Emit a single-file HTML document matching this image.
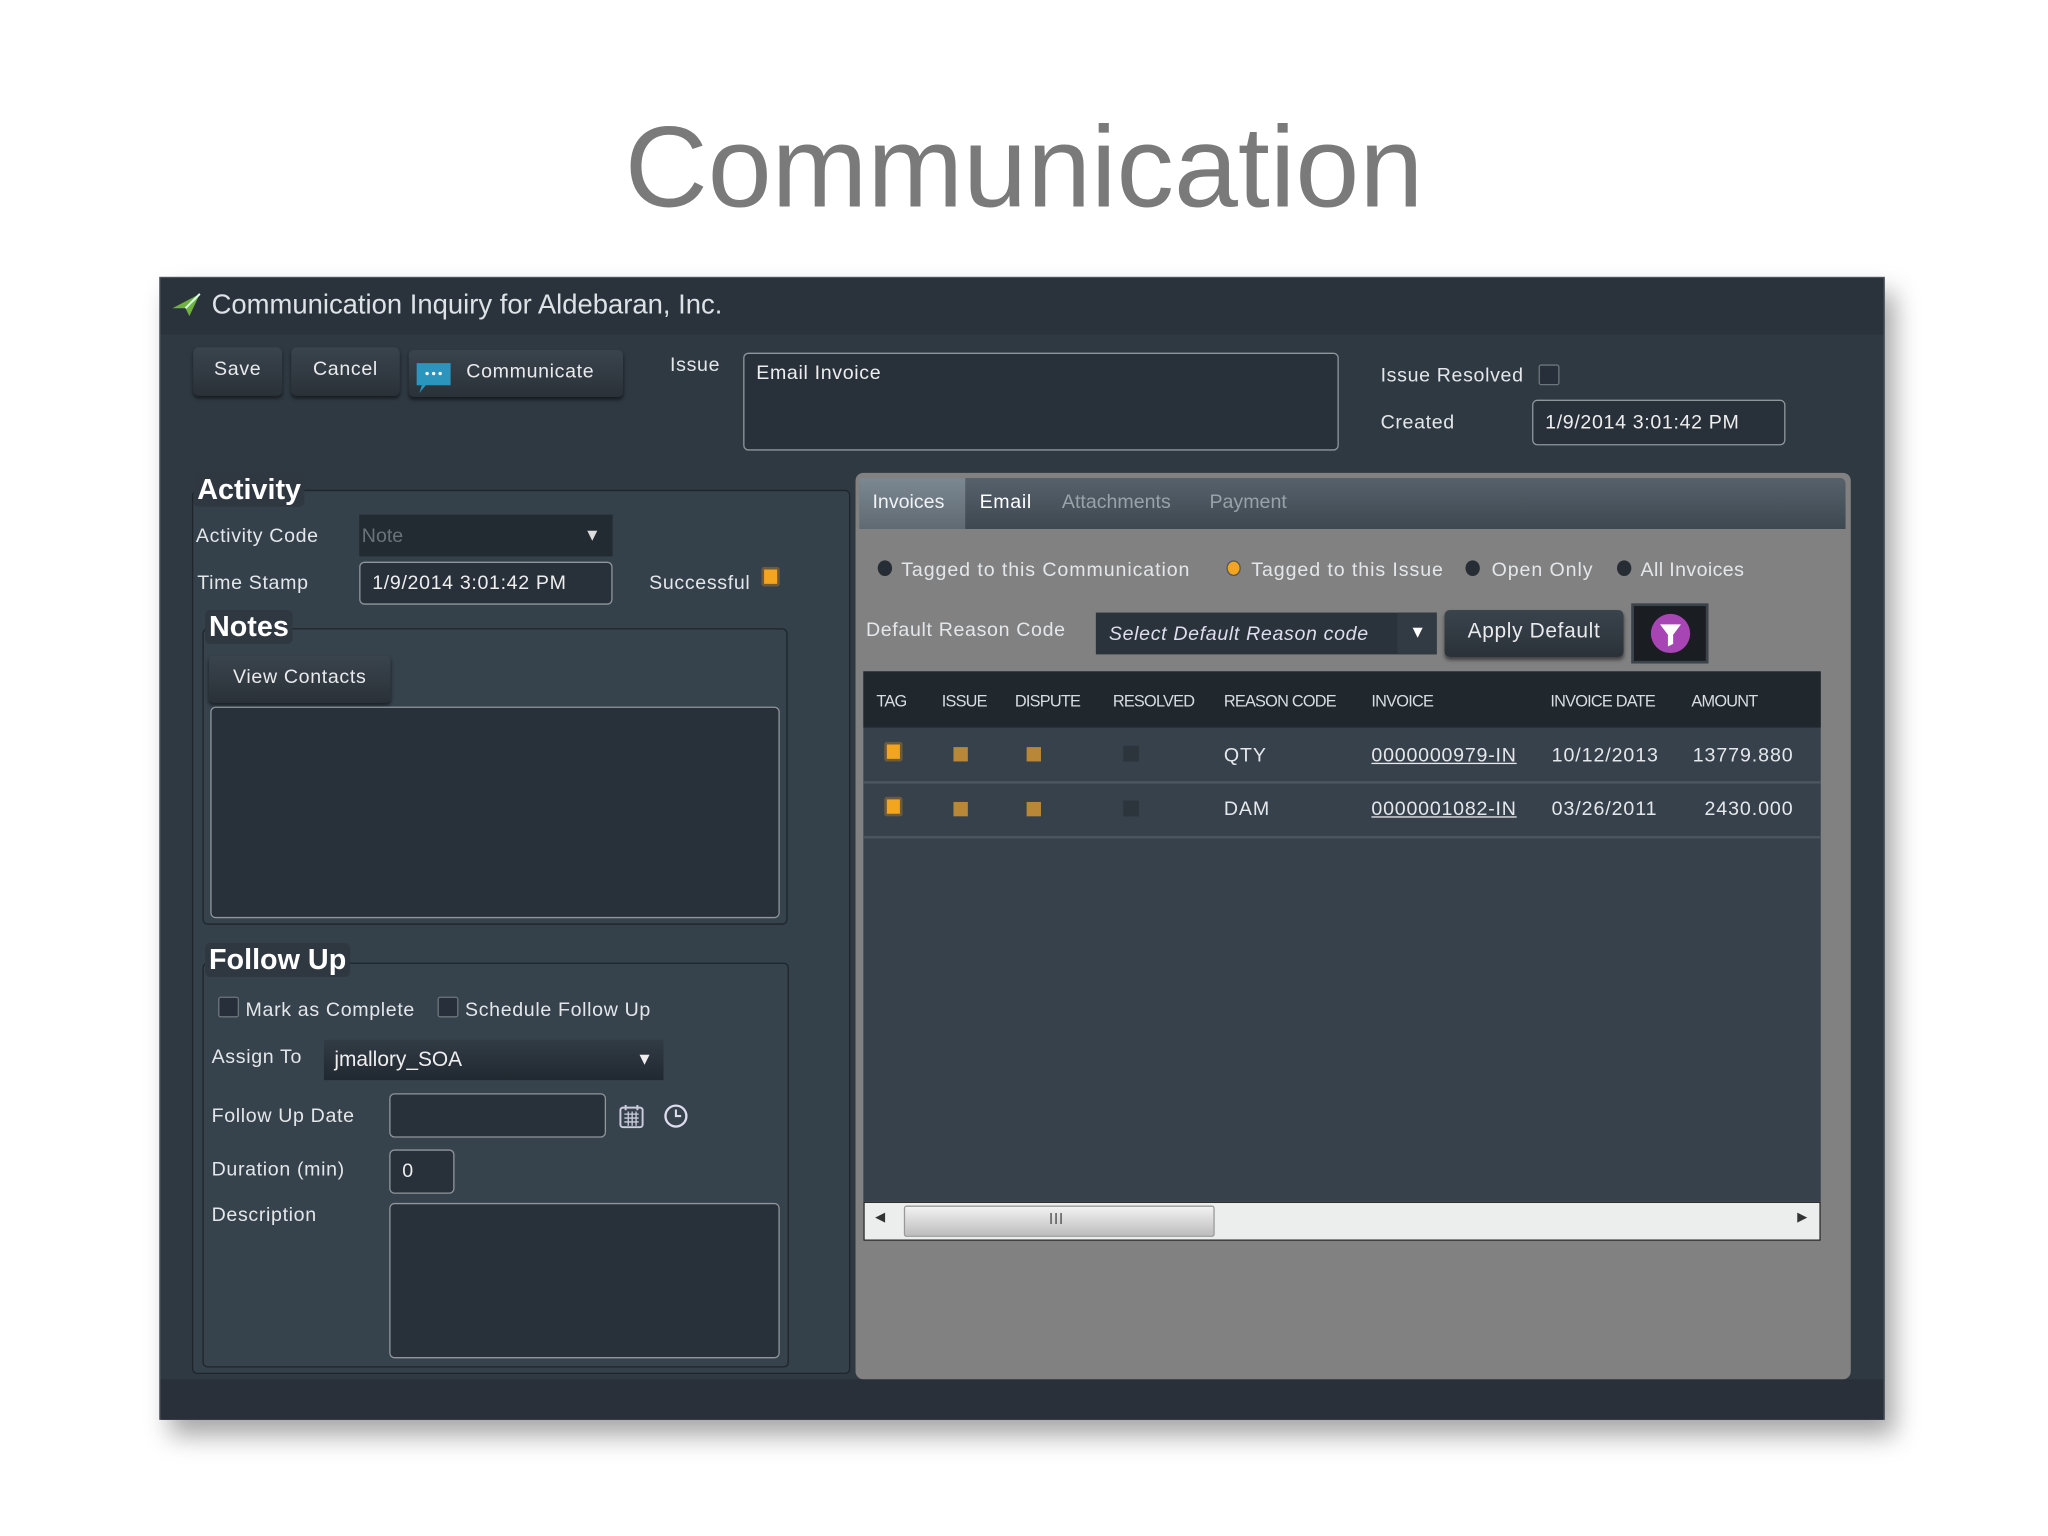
<!DOCTYPE html>
<html><head><meta charset="utf-8"><style>
*{margin:0;padding:0;box-sizing:border-box}
html,body{width:2048px;height:1536px;overflow:hidden;background:#fff}
#w{position:absolute;left:0;top:0;width:1568px;height:1176px;transform:scale(1.30612);transform-origin:0 0;font-family:"Liberation Sans",sans-serif;color:#e6e9ec}
.a{position:absolute}
.t{position:absolute;font-size:15px;white-space:nowrap;color:#e4e7ea;letter-spacing:.5px}
.btn{position:absolute;background:linear-gradient(#3a444d,#2a3138);border-radius:4px;box-shadow:0 2px 3px rgba(0,0,0,.5);color:#e8eaec;font-size:15px;text-align:center;letter-spacing:.5px}
.inp{position:absolute;background:#28313a;border:1px solid #8f969c;border-radius:4px;font-size:15px;color:#eee;padding-left:9px;letter-spacing:.5px}
.grp{position:absolute;border:1px solid #1e252b;border-radius:4px;background:#36424c}
.h{position:absolute;font-weight:bold;font-size:22px;color:#fff;background:#2f3840;padding:0 3px;border-radius:4px}
.cb{position:absolute;width:16px;height:16px;border:1px solid #6d757c;background:#27303a;border-radius:2px}
.or{position:absolute;width:14px;height:15px;background:#f3a51f;border:2px solid #6d5a3a;border-radius:2px}
.sq{position:absolute;width:11px;height:11px;background:#b88838}
.dk{position:absolute;width:12px;height:12px;background:#2c343c}
.th{position:absolute;top:530px;font-size:12.5px;color:#d8dde2;letter-spacing:-.6px}
.td{position:absolute;font-size:15px;color:#e5e8eb;letter-spacing:.7px}
.rd{position:absolute;width:11px;height:12px;border-radius:50%;background:#262d34;top:429px}
</style></head><body><div id="w">
<div class="t" style="left:0;width:1568px;text-align:center;top:77px;font-size:88px;color:#7a7a7a;letter-spacing:0">Communication</div>
<div class="a" style="left:122px;top:212px;width:1321px;height:875px;background:#2f3942;box-shadow:8px 12px 18px rgba(0,0,0,.35);border:1px solid #4a525a"></div>
<div class="a" style="left:123px;top:213px;width:1319px;height:43px;background:#2a333b"></div>
<div class="a" style="left:123px;top:1056px;width:1319px;height:31px;background:#2a3039"></div>
<svg class="a" style="left:131px;top:224px" width="24" height="20"><path d="M1 12 L22 1 L14 18 L11 12 Z" fill="#6fb33e"/><path d="M11 12 L22 1" stroke="#dfe" stroke-width="1.5"/></svg>
<div class="t" style="left:162px;top:222px;font-size:21px;color:#dde2e6;letter-spacing:0">Communication Inquiry for Aldebaran, Inc.</div>
<div class="btn" style="left:148px;top:266px;width:68px;height:37px;line-height:34px">Save</div>
<div class="btn" style="left:223px;top:266px;width:83px;height:37px;line-height:34px">Cancel</div>
<div class="btn" style="left:313px;top:268px;width:164px;height:36px;line-height:34px;text-align:left;padding-left:44px">Communicate</div>
<svg class="a" style="left:318px;top:277px" width="28" height="25"><path d="M1 1 H27 V18 H8 L3 24 L5 18 H1 Z" fill="#2b95be"/><circle cx="9" cy="9" r="1.3" fill="#fff"/><circle cx="14" cy="9" r="1.3" fill="#fff"/><circle cx="19" cy="9" r="1.3" fill="#fff"/></svg>
<div class="t" style="left:513px;top:271px">Issue</div>
<div class="inp" style="left:569px;top:270px;width:456px;height:75px;padding-top:6px">Email Invoice</div>
<div class="t" style="left:1057px;top:279px">Issue Resolved</div>
<div class="cb" style="left:1178px;top:279px"></div>
<div class="t" style="left:1057px;top:315px">Created</div>
<div class="inp" style="left:1173px;top:306px;width:194px;height:35px;line-height:33px">1/9/2014 3:01:42 PM</div>

<div class="grp" style="left:147px;top:375px;width:504px;height:677px;background:#34404a"></div>
<div class="h" style="left:148px;top:362px">Activity</div>
<div class="t" style="left:150px;top:402px">Activity Code</div>
<div class="a" style="left:275px;top:394px;width:194px;height:32px;background:#232b32;color:#6b737a;font-size:15px;padding:8px 2px">Note</div>
<div class="t" style="left:447px;top:402px;font-size:13px;color:#ddd">▼</div>
<div class="t" style="left:151px;top:438px">Time Stamp</div>
<div class="inp" style="left:275px;top:430px;width:194px;height:33px;line-height:31px">1/9/2014 3:01:42 PM</div>
<div class="t" style="left:497px;top:438px">Successful</div>
<div class="or" style="left:583px;top:434px"></div>

<div class="grp" style="left:155px;top:481px;width:448px;height:227px"></div>
<div class="h" style="left:157px;top:467px">Notes</div>
<div class="btn" style="left:160px;top:502px;width:139px;height:36px;line-height:34px">View Contacts</div>
<div class="inp" style="left:161px;top:541px;width:436px;height:162px"></div>

<div class="grp" style="left:155px;top:737px;width:449px;height:310px"></div>
<div class="h" style="left:157px;top:722px">Follow Up</div>
<div class="cb" style="left:167px;top:763px"></div>
<div class="t" style="left:188px;top:765px">Mark as Complete</div>
<div class="cb" style="left:335px;top:763px"></div>
<div class="t" style="left:356px;top:765px">Schedule Follow Up</div>
<div class="t" style="left:162px;top:801px">Assign To</div>
<div class="a" style="left:248px;top:796px;width:260px;height:31px;background:linear-gradient(#323c45,#202830);font-size:16px;padding:7px 8px;color:#eee">jmallory_SOA</div>
<div class="t" style="left:487px;top:803px;font-size:13px;color:#eee">▼</div>
<div class="t" style="left:162px;top:846px">Follow Up Date</div>
<div class="inp" style="left:298px;top:837px;width:166px;height:34px"></div>
<svg class="a" style="left:474px;top:845px" width="20" height="20"><rect x="1" y="3" width="17" height="15" rx="2" fill="none" stroke="#ccd" stroke-width="1.5"/><path d="M4 8h11M4 11h11M4 14h11M7 6v11M10 6v11M13 6v11" stroke="#ccd" stroke-width="1"/><path d="M5 1v4M14 1v4" stroke="#ccd" stroke-width="1.5"/></svg>
<svg class="a" style="left:508px;top:845px" width="20" height="20"><circle cx="9.5" cy="9.5" r="8" fill="none" stroke="#dde" stroke-width="1.8"/><path d="M9.5 4.5v5h4" fill="none" stroke="#dde" stroke-width="1.6"/></svg>
<div class="t" style="left:162px;top:887px">Duration (min)</div>
<div class="inp" style="left:298px;top:880px;width:50px;height:34px;line-height:32px">0</div>
<div class="t" style="left:162px;top:922px">Description</div>
<div class="inp" style="left:298px;top:921px;width:299px;height:119px"></div>

<div class="a" style="left:655px;top:362px;width:762px;height:694px;background:#818181;border-radius:6px"></div>
<div class="a" style="left:658px;top:366px;width:755px;height:39px;background:linear-gradient(#56616b,#3e4851);border-radius:4px 4px 0 0"></div>
<div class="a" style="left:658px;top:366px;width:81px;height:39px;background:linear-gradient(#7c8891,#5f6a73)"></div>
<div class="t" style="left:668px;top:376px;color:#f0f2f4;letter-spacing:0">Invoices</div>
<div class="t" style="left:750px;top:376px;color:#fff">Email</div>
<div class="t" style="left:813px;top:376px;color:#9aa2a9;letter-spacing:0">Attachments</div>
<div class="t" style="left:926px;top:376px;color:#9aa2a9;letter-spacing:0">Payment</div>
<div class="rd" style="left:672px"></div><div class="t" style="left:690px;top:428px;letter-spacing:.7px">Tagged to this Communication</div>
<div class="rd" style="left:939px;background:#f3a51f;border:1px solid #555"></div><div class="t" style="left:958px;top:428px;letter-spacing:.7px">Tagged to this Issue</div>
<div class="rd" style="left:1122px"></div><div class="t" style="left:1142px;top:428px;letter-spacing:.7px">Open Only</div>
<div class="rd" style="left:1238px"></div><div class="t" style="left:1256px;top:428px;letter-spacing:.3px">All Invoices</div>
<div class="t" style="left:663px;top:474px">Default Reason Code</div>
<div class="a" style="left:839px;top:469px;width:261px;height:32px;background:#2a333b"></div>
<div class="a" style="left:1070px;top:469px;width:30px;height:32px;background:#323b43"></div>
<div class="t" style="left:849px;top:477px;font-style:italic;color:#dde">Select Default Reason code</div>
<div class="t" style="left:1079px;top:476px;font-size:13px;color:#fff">▼</div>
<div class="btn" style="left:1106px;top:467px;width:137px;height:36px;line-height:34px;font-size:16px">Apply Default</div>
<div class="a" style="left:1249px;top:462px;width:59px;height:46px;background:#1a1e22;border:2px solid #3c444b"></div>
<svg class="a" style="left:1263px;top:469px" width="32" height="32"><circle cx="16" cy="16" r="15" fill="#a845b5"/><path d="M8 9h16l-6 8v7l-4 2v-9z" fill="#fff"/></svg>
<div class="a" style="left:661px;top:514px;width:733px;height:407px;background:#36414b"></div>
<div class="a" style="left:661px;top:514px;width:733px;height:43px;background:#20272d"></div>
<div class="a" style="left:661px;top:598px;width:733px;height:2px;background:#4a555e"></div>
<div class="a" style="left:661px;top:640px;width:733px;height:2px;background:#4a555e"></div>
<div class="th" style="left:671px">TAG</div><div class="th" style="left:721px">ISSUE</div><div class="th" style="left:777px">DISPUTE</div><div class="th" style="left:852px">RESOLVED</div><div class="th" style="left:937px">REASON CODE</div><div class="th" style="left:1050px">INVOICE</div><div class="th" style="left:1187px">INVOICE DATE</div><div class="th" style="left:1295px">AMOUNT</div>
<div class="or" style="left:677px;top:568px"></div><div class="sq" style="left:730px;top:572px"></div><div class="sq" style="left:786px;top:572px"></div><div class="dk" style="left:860px;top:571px"></div>
<div class="td" style="left:937px;top:570px">QTY</div><div class="td" style="left:1050px;top:570px;text-decoration:underline;letter-spacing:.6px">0000000979-IN</div><div class="td" style="left:1188px;top:570px">10/12/2013</div><div class="td" style="left:1296px;top:570px">13779.880</div>
<div class="or" style="left:677px;top:610px"></div><div class="sq" style="left:730px;top:614px"></div><div class="sq" style="left:786px;top:614px"></div><div class="dk" style="left:860px;top:613px"></div>
<div class="td" style="left:937px;top:611px">DAM</div><div class="td" style="left:1050px;top:611px;text-decoration:underline;letter-spacing:.6px">0000001082-IN</div><div class="td" style="left:1188px;top:611px">03/26/2011</div><div class="td" style="left:1305px;top:611px">2430.000</div>
<div class="a" style="left:661px;top:920px;width:733px;height:30px;background:#eceded;border:1px solid #222"></div>
<div class="a" style="left:692px;top:923px;width:238px;height:24px;background:linear-gradient(#f2f2f2,#bdbdbd);border:1px solid #999;border-radius:2px"></div>
<div class="t" style="left:803px;top:926px;font-size:12px;color:#555">III</div>
<div class="t" style="left:670px;top:927px;font-size:10px;color:#333">◀</div>
<div class="t" style="left:1376px;top:927px;font-size:10px;color:#333">▶</div>
</div></body></html>
